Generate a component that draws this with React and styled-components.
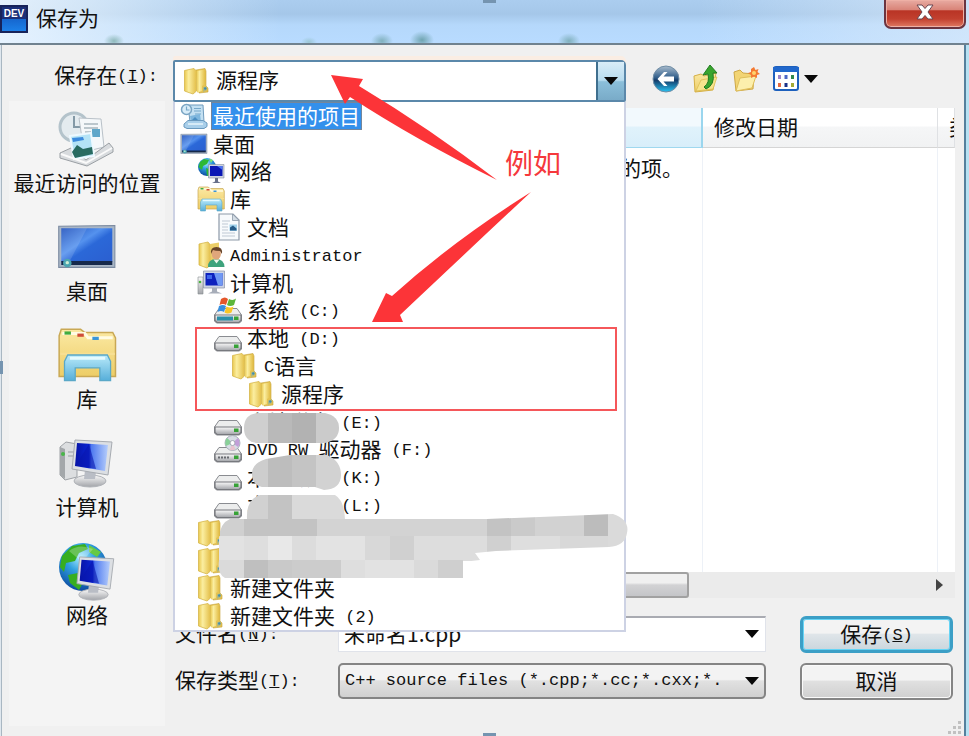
import React from "react";
import styled, { createGlobalStyle } from "styled-components";

const cjk = '"Noto Sans CJK SC", "Noto Sans", sans-serif';
const mono = '"Liberation Mono", "Noto Sans CJK SC", monospace';

const GlobalStyle = createGlobalStyle`
  * { box-sizing: border-box; }
  body {
    margin: 0;
    font-family: ${cjk};
    font-size: 21px;
    line-height: 26px;
    color: #111;
    background: #c4def8;
    overflow: hidden;
  }
  button, input, select { font: inherit; color: inherit; margin: 0; }
`;

const Window = styled.div`
  position: relative;
  min-height: 100vh;
  display: flex;
  flex-direction: column;
  padding: 0 3px 0 1px;
  background: linear-gradient(90deg, #dfe7ee 0 50%, #b7e2f3 50%);
`;

const TitleBar = styled.header`
  height: 45px;
  margin: 0 -3px 0 -1px;
  display: flex;
  align-items: flex-start;
  border-bottom: 2px solid #70828f;
  background:
    radial-gradient(ellipse 10px 7px at 114px 41px, #8fb9bb, transparent),
    radial-gradient(ellipse 8px 5px at 309px 42px, #9cc7d6, transparent),
    radial-gradient(ellipse 11px 8px at 382px 41px, #80b0bd, transparent),
    radial-gradient(ellipse 12px 9px at 422px 40px, #6fa4b0, transparent),
    radial-gradient(ellipse 11px 8px at 569px 41px, #80b0bd, transparent),
    linear-gradient(90deg, #f2f9ffcc 0, #e6f2fcaa 90px, transparent 280px, transparent 72%, #dcebfaaa 100%),
    linear-gradient(180deg, #abcdef 0, #a5c7e9 14px, #b5d8fb 25px, #b8dbff 42px);
`;

const AppBadge = styled.span`
  width: 28px;
  height: 28px;
  margin-top: 5px;
  border: 2px solid #17235a;
  background: linear-gradient(180deg, #1b2f78 0 48%, #1667cf 52%, #1c80e8);
  color: #fff;
  font: bold 10px/13px "Liberation Sans", sans-serif;
  text-align: center;
  overflow: hidden;
`;

const Title = styled.h1`
  margin: 4px 0 0 8px;
  flex: 1;
  font-size: 21px;
  line-height: 26px;
  font-weight: 400;
`;

const CloseButton = styled.button`
  width: 82px;
  height: 29px;
  margin-right: 3px;
  padding: 0 0 4px;
  display: grid;
  place-items: center;
  border: 2px solid #6b3440;
  border-top: 0;
  border-radius: 0 0 7px 7px;
  box-shadow: inset 0 0 0 1px #eeb0a5;
  background: linear-gradient(180deg, #e8aba2 0, #d98478 36%, #b93425 40%, #c2402f 70%, #e07a63 100%);
`;

const Body = styled.main`
  flex: 1;
  display: flex;
  border: 1px solid #a9b7c2;
  border-width: 0 2px 0 1px;
  border-right-color: #55809d;
  background: #f0f0f0;
`;

const LeftColumn = styled.div`
  width: 171px;
  flex: none;
  display: flex;
  flex-direction: column;
`;

const LookInLabel = styled.label`
  height: 56px;
  padding: 16px 15px 0 0;
  text-align: right;
  white-space: nowrap;
`;

const Latin = styled.span`
  font-family: ${mono};
  font-size: 17px;
  line-height: 17px;
  vertical-align: ${(p) => (p.$raised ? "2px" : "baseline")};
  white-space: pre;
`;

const Places = styled.nav`
  flex: 1;
  margin: 0 8px 10px 7px;
  padding-top: 8px;
  background: #f4f4f4;
`;

const Place = styled.button`
  width: 100%;
  height: 108px;
  padding: 0;
  display: flex;
  flex-direction: column;
  align-items: center;
  border: 0;
  background: none;
  white-space: nowrap;
`;

const RightColumn = styled.div`
  flex: 1;
  min-width: 0;
  display: flex;
  flex-direction: column;
  padding: 15px 9px 37px 0;
`;

const TopBar = styled.div`
  display: flex;
  align-items: center;
  height: 42px;
  margin-bottom: 6px;
`;

const Combo = styled.div`
  position: relative;
  z-index: 2;
  flex: 0 1 453px;
  height: 42px;
`;

const ComboButton = styled.button`
  width: 100%;
  height: 42px;
  display: flex;
  align-items: center;
  gap: 5px;
  padding: 0 0 0 8px;
  border: 2px solid #5b88aa;
  border-radius: 2px 5px 2px 2px;
  background: #fff;
  box-shadow: 0 -4px 0 #faede3;
  text-align: left;
`;

const ComboValue = styled.span`
  padding-bottom: 4px;
`;

const ComboArrow = styled.span`
  margin-left: auto;
  width: 28px;
  height: 38px;
  display: grid;
  place-items: center;
  border-left: 2px solid #3f6f8e;
  background: linear-gradient(180deg, #d9edf8 0, #b8dcef 48%, #8bbfda 52%, #79abc8);
`;

const Popup = styled.ul`
  position: absolute;
  top: 42px;
  left: 0;
  right: 0;
  height: 530px;
  margin: 0;
  padding: 0 0 0 5px;
  display: grid;
  grid-template-rows: repeat(19, 1fr);
  list-style: none;
  background: #fff;
  border: 2px solid #cdd2e4;
  border-top: 0;
`;

const Row = styled.li`
  display: flex;
  align-items: center;
  min-height: 0;
  padding-left: ${(p) => p.$level * 17}px;
  white-space: nowrap;
`;

const RowText = styled.span`
  margin-left: 4px;
  padding: 0 1px;
  height: 26px;
  line-height: 24px;
  color: ${(p) => (p.$selected ? "#fff" : "#111")};
  background: ${(p) => (p.$selected ? "#3390ec" : "none")};
  outline: ${(p) => (p.$selected ? "1px solid #74869b" : "none")};
`;

const Overlay = styled.svg`
  position: absolute;
  top: 0;
  left: 0;
  overflow: visible;
  pointer-events: none;
`;

const Note = styled.strong`
  position: absolute;
  top: 86px;
  left: 332px;
  font-size: 28px;
  line-height: 32px;
  font-weight: 400;
  color: #f5383c;
`;

const Tools = styled.div`
  display: flex;
  align-items: center;
  gap: 12px;
  margin: 0 0 4px 26px;
`;

const ToolButton = styled.button`
  display: flex;
  align-items: center;
  gap: 4px;
  padding: 0;
  border: 0;
  background: none;
`;

const ListPanel = styled.div`
  flex: 1;
  display: flex;
  flex-direction: column;
  background: #fff;
  margin-bottom: 18px;
`;

const FileTable = styled.table`
  flex: 1;
  width: 100%;
  display: grid;
  grid-template-rows: 40px 1fr;
  border-spacing: 0;

  thead, tbody { display: grid; }
  tr { display: grid; grid-template-columns: minmax(0, 530px) minmax(0, 1fr) 17px; }
  th { text-align: left; font-weight: 400; padding: 5px 0 0 11px; overflow: hidden; white-space: nowrap; }
  td { padding: 6px 19px 0 0; text-align: right; border-right: 1px solid #edf1f7; }
  td:last-child { border: 0; padding: 0; }
`;

const HeadCell = styled.th`
  border-bottom: 1px solid ${(p) => (p.$active ? "#9fd8ef" : "#d5d5d5")};
  border-right: ${(p) => (p.$active ? "2px solid #9bd6ee" : "1px solid #dfe1e4")};
  background: ${(p) =>
    p.$active
      ? "linear-gradient(180deg, #f2f9fd 0 45%, #e0f2fb 50%, #d8eefa)"
      : "linear-gradient(180deg, #fff 0 45%, #f5f6f7 50%, #f1f2f3)"};
`;

const ScrollTrack = styled.div`
  height: 26px;
  display: flex;
  justify-content: space-between;
  align-items: center;
  padding-right: 12px;
  background: #ebebeb;
`;

const ScrollThumb = styled.div`
  width: 67%;
  height: 26px;
  border: 2px solid #a1a1a1;
  border-radius: 3px;
  background: linear-gradient(180deg, #f0f0f0 0 40%, #d2d2d4 50%, #c4c5c8);
`;

const Form = styled.form`
  display: grid;
  grid-template-columns: 165px minmax(0, 1fr) 153px;
  grid-auto-rows: 36px;
  row-gap: 11px;
  align-items: center;
  margin-right: 2px;
`;

const FieldLabel = styled.label`
  padding: 0 0 4px 2px;
  white-space: nowrap;
`;

const Field = styled.div`
  display: grid;
  align-items: center;
  margin-right: 34px;

  > * { grid-area: 1 / 1; }
  > svg { justify-self: end; margin-right: 7px; pointer-events: none; }
`;

const TextBox = styled.input`
  width: 100%;
  height: 36px;
  padding: 0 32px 4px 5px;
  border: 1px solid #e0e3ea;
  border-top: 2px solid #a9abb2;
  background: #fff;
`;

const TypeSelect = styled.select`
  appearance: none;
  width: 100%;
  height: 36px;
  padding: 0 34px 0 5px;
  border: 2px solid #848484;
  border-radius: 5px;
  font-family: ${mono};
  font-size: 17px;
  background: linear-gradient(180deg, #f3f3f3 0 45%, #e1e1e1 50%, #d0d0d0);
`;

const PushButton = styled.button`
  height: 37px;
  padding: 0 0 3px;
  border: ${(p) => (p.$primary ? "3px solid #3c9fc6" : "2px solid #858585")};
  border-radius: 6px;
  box-shadow: inset 0 0 0 1px ${(p) => (p.$primary ? "#66d4f5" : "#fafafa")};
  background: linear-gradient(180deg, #f3f3f3 0 45%, ${(p) => (p.$primary ? "#dfe5e9 50%, #cbd6dd" : "#e0e0e0 50%, #cfcfcf")});
`;

const Handle = styled.span`
  position: absolute;
  width: ${(p) => (p.$side ? 3 : 13)}px;
  height: ${(p) => (p.$side ? 13 : 3)}px;
  ${(p) => (p.$side ? "left: 0; top: 49%;" : "left: calc(50% - 2px);")}
  ${(p) => (p.$edge === "top" ? "top: 0;" : "")}
  ${(p) => (p.$edge === "bottom" ? "bottom: 0;" : "")}
  background: #7594b0;
`;

const Grip = styled.svg`
  position: absolute;
  right: 6px;
  bottom: 0;
`;

const Definitions = styled.svg`
  position: absolute;
`;

/* ---------- small icons ---------- */

const Icon = ({ size = 28, box = 28, children }) => (
  <svg width={size} height={size} viewBox={`0 0 ${box} ${box}`} aria-hidden="true">
    {children}
  </svg>
);

const Gradients = () => (
  <Definitions width="0" height="0" aria-hidden="true">
    <defs>
      <linearGradient id="gold" x1="0" x2="1"><stop offset="0" stopColor="#e9c84f" /><stop offset=".35" stopColor="#fbeea0" /><stop offset="1" stopColor="#e3be48" /></linearGradient>
      <linearGradient id="goldV" x1="0" x2="0" y1="0" y2="1"><stop offset="0" stopColor="#fbe9a4" /><stop offset="1" stopColor="#edcd66" /></linearGradient>
      <linearGradient id="blue" x1="0" x2="1" y1="0" y2="1"><stop offset="0" stopColor="#1d50bd" /><stop offset=".4" stopColor="#5592ee" /><stop offset=".55" stopColor="#2b68d8" /><stop offset="1" stopColor="#2b5fd0" /></linearGradient>
      <linearGradient id="screen" x1="0" x2="1"><stop offset="0" stopColor="#0714a5" /><stop offset=".42" stopColor="#0b24d2" /><stop offset=".5" stopColor="#4f7af0" /><stop offset="1" stopColor="#b5cdfb" /></linearGradient>
      <radialGradient id="globe" cx=".45" cy=".3" r=".75"><stop offset="0" stopColor="#a9edff" /><stop offset=".4" stopColor="#2f9fe0" /><stop offset="1" stopColor="#083f97" /></radialGradient>
      <linearGradient id="metal" x1="0" x2="0" y1="0" y2="1"><stop offset="0" stopColor="#fafafa" /><stop offset="1" stopColor="#a2a4a9" /></linearGradient>
      <linearGradient id="cyan" x1="0" x2="0" y1="0" y2="1"><stop offset="0" stopColor="#b9eafa" /><stop offset="1" stopColor="#56aed9" /></linearGradient>
      <linearGradient id="nav" x1="0" x2="0" y1="0" y2="1"><stop offset="0" stopColor="#a9bccd" /><stop offset=".45" stopColor="#315e8b" /><stop offset=".55" stopColor="#153c69" /><stop offset="1" stopColor="#28c4f4" /></linearGradient>
    </defs>
  </Definitions>
);

const Folder = () => (
  <Icon>
    <path d="M13 3 22 1.500 23 4V19l2 2v4l-9 1z" fill="#e5c351" stroke="#c6a33a" strokeWidth=".6" />
    <path d="M1.500 3.500 11 1.500 13.500 4V24L10 27 1.500 24z" fill="url(#gold)" stroke="#d6b64a" strokeWidth=".8" />
    <path d="M13.500 4 22 2.500V17l-3 2v5l-5 1.500z" fill="url(#gold)" />
    <path d="M20 20.500 23.500 19v4.500L20 25z" fill="#b2b77e" />
    <circle cx="22.300" cy="21.500" r="1.300" fill="#3f8fb1" />
  </Icon>
);

const Desktop = ({ size }) => (
  <Icon size={size}>
    <path d="M.8 4.300 27 4V23.500H.8z" fill="#a9b6c6" stroke="#7c8ba1" strokeWidth=".5" />
    <path d="M2 5.300H25.800V21H2z" fill="url(#blue)" />
    <path d="M2 20.500H25.800v1.900H2z" fill="#16294b" />
    <path d="M2 5.300H14L6 20.500H2z" fill="#fff" opacity=".12" />
    <circle cx="4.800" cy="21.500" r="2" fill="#4ba5b0" /><circle cx="4.800" cy="21.300" r=".8" fill="#cdeed4" />
  </Icon>
);

const BluePrint = () => (
  <Icon>
    <path d="M8 3H23L24 20H10z" fill="#c3e0f2" stroke="#6f9bbd" />
    <circle cx="6.500" cy="7.500" r="5" fill="#d8ecf8" stroke="#7aa5c4" strokeWidth="1.500" />
    <path d="M6.500 4.500v3.500H9.500M14 6.500h7M14 9h7M15 12h6" stroke="#77a8c9" fill="none" strokeWidth="1.200" />
    <path d="m10 14 10-2 1 8H11z" fill="#7fb7de" /><path d="m11 19 4-4 5 5z" fill="#4a8ec2" />
    <path d="M4 22 8 18.500H23L27 21v3.500l-3 2H7L4 25z" fill="#a9cfea" stroke="#6b9abf" />
    <path d="M8 22H23" stroke="#e7f4fb" strokeWidth="1.500" />
  </Icon>
);

const Network = () => (
  <Icon>
    <circle cx="10" cy="10" r="9" fill="url(#globe)" />
    <path d="M3 5 7 2 12 3 10 7 6 9 5 13 1.500 10zM9 11l5 2-1 5-3 1z" fill="#2cb834" />
    <path d="m12 1.500 4 1.500-2 3z" fill="#7de36c" />
    <path d="M11.500 7.500H27V21H11.500z" fill="#cfd4de" stroke="#888fa0" strokeWidth=".6" />
    <path d="M13 9H25.500V19H13z" fill="#0b18b5" /><path d="m20 9 5.500 4V9z" fill="#4c74ef" />
    <path d="M18 21h3v3.500l3 1.500H15l3-1.500z" fill="#68708a" />
  </Icon>
);

const Library = ({ size }) => (
  <Icon size={size}>
    <path d="M1 5 2 2H11l2 1.500H26L27.300 6V24H1z" fill="url(#goldV)" stroke="#c9a854" strokeWidth=".7" />
    <path d="M2.500 4H13l1.500 2H26" stroke="#fffbe3" strokeWidth="1.400" fill="none" />
    <path d="M3.500 3h3v1.500h-3z" fill="#41ac40" /><path d="M9.500 4h3v1.500h-3z" fill="#cf4c39" /><path d="M16.500 5.500h3V7h-3z" fill="#3a95d8" />
    <path d="M1.500 13.500H27" stroke="#f7df92" />
    <path d="M5 14H23.500L25 17v9H20V20H8.500v6H3.500V17z" fill="url(#cyan)" stroke="#5aa8c8" strokeWidth=".6" />
    <path d="M6 15.500H22.500" stroke="#e4faff" strokeWidth="1.400" />
  </Icon>
);

const Document = () => (
  <Icon>
    <path d="M5 1H19L25 7V27H5z" fill="#f7fafc" stroke="#8d99a8" strokeWidth="1.200" />
    <path d="M18.500 1V7.500H25z" fill="#d4dde5" stroke="#8d99a8" strokeWidth=".8" />
    <path d="M8 8h8M8 11h6M8 14h6M8 17h6M8 20h13M8 23h13" stroke="#bfc9d4" />
    <path d="M15.500 11.500H23V18H15.500z" fill="#9ed0ea" /><path d="M16 17.500v-3l3-2 3.500 3v2z" fill="#265b87" />
  </Icon>
);

const UserFolder = () => (
  <Icon>
    <path d="M2 3 11 1 13.500 4V24L10 27 2 24z" fill="url(#gold)" stroke="#d6b64a" strokeWidth=".8" />
    <path d="M13 3 22 1.500V24l-8 2z" fill="#ebce68" />
    <path d="M11 26q0-8 8-8t8.500 8z" fill="#3ea37d" /><path d="m16.500 18.500 3 4 3-4z" fill="#eef5ec" />
    <ellipse cx="19.300" cy="13" rx="4.600" ry="5.500" fill="#dfa67b" />
    <path d="M14 13Q13 6 19.500 6t5.500 7l-2-3q-5 0-7-1z" fill="#674429" />
  </Icon>
);

const Computer = () => (
  <Icon>
    <path d="M1 8H6V25H1z" fill="url(#metal)" stroke="#85898f" strokeWidth=".6" /><circle cx="3" cy="13" r="1.300" fill="#49b43d" />
    <path d="M6.500 2H27.500V19H6.500z" fill="#cdd4e4" stroke="#8991a3" strokeWidth=".7" />
    <path d="M8.500 4H25.500V16.500H8.500z" fill="#0d20bd" /><path d="M17 4h8.500v12.500H21z" fill="#6f98f4" /><path d="M10 6h5v4h-5z" fill="#3d65eb" />
    <path d="M15 19h5v3.500l5 2H11l4-2z" fill="#a7adb9" />
  </Icon>
);

const DriveBody = () => (
  <>
    <path d="M5 12.500H23L27.500 19V25l-2 2H2.500l-2-2V19z" fill="#eceded" stroke="#8a8c91" />
    <path d="M1 19H27v5.500L25 26.500H3L1 24.500z" fill="url(#metal)" stroke="#77797e" strokeWidth="1.200" />
    <path d="M20 20.500h4.500v3.500H20z" fill="#37a237" />
  </>
);
const Drive = () => <Icon><DriveBody /></Icon>;

const SystemDrive = () => (
  <Icon>
    <DriveBody />
    <path d="M3 20.500H19v4H3z" fill="#2a8fa9" />
    <path d="M7 3q4-3 7 0l-2 6q-3-2-6.500 0z" fill="#e4572b" /><path d="M15 3q4 2 7-.5L20 9q-4 2-7 0z" fill="#5db63a" />
    <path d="M5 10q4-2 7 0l-2 6q-3-2-6.500 0z" fill="#378fe0" /><path d="M12.500 10.500q4 2 7 0l-2 6q-4 2-7 0z" fill="#f8c626" />
  </Icon>
);

const DvdDrive = () => (
  <Icon>
    <DriveBody />
    <circle cx="18.500" cy="8" r="7.500" fill="#d7dde5" stroke="#9ba3ad" strokeWidth=".8" />
    <path d="M18.500 8 13 3q-3 4-1 8z" fill="#88d198" /><path d="M18.500 8 24 3q3 5 0 9z" fill="#c29ed8" /><path d="m18.500 8-3 7q4 1 6-1z" fill="#e9c3ce" />
    <circle cx="18.500" cy="8" r="2.500" fill="#fff" stroke="#a4a8b4" />
    <path d="M4 22.500H16" stroke="#686b70" strokeWidth="2" strokeDasharray="2 1" />
  </Icon>
);

/* ---------- large sidebar icons ---------- */

const RecentLarge = () => (
  <Icon size={60} box={60}>
    <circle cx="17" cy="18" r="14" fill="#e4ebef" stroke="#b4c3cb" strokeWidth="3" />
    <path d="M17 7V18H27" stroke="#8499a6" strokeWidth="2" fill="none" />
    <path d="M22 9 44 10 47 38 27 43z" fill="#f5f8fa" stroke="#b9c1c8" />
    <path d="M27 15H41M27 19H41M28 23H34M29 27H34" stroke="#a9b6bf" strokeWidth="1.500" />
    <path d="M35 20H43V28H35z" fill="#5fa7ca" />
    <path d="M3 44 14 39 29 51 52 34 56 39V43L30 57 3 49z" fill="#d8dbde" stroke="#9ba0a5" />
    <path d="m13 27 21-3 3 23-20 3z" fill="#b4e3f6" stroke="#eef9ff" strokeWidth="2" />
    <path d="m15 29 11-1 1 3-11 2z" fill="#3c8bdd" /><path d="m15 43 5-7 6 4 9-2 1 7-18 4z" fill="#286b61" />
    <path d="m4 45 25 9 26-15" stroke="#fafafa" strokeWidth="2" fill="none" />
  </Icon>
);

const Monitor = () => (
  <>
    <ellipse cx="19" cy="42" rx="16" ry="6" fill="url(#metal)" stroke="#b0b3b8" />
    <path d="m14 31 11 2-1 7H13z" fill="#b9bdc5" />
    <path d="M4 1 41 3 37 36 1 30z" fill="#dcdfe3" stroke="#a7abb1" />
    <path d="M6 4 37 6 34 32 4 27z" fill="url(#screen)" />
    <path d="m18 5 7 25-11-2-9-2Z" fill="#0816ae" opacity=".6" />
  </>
);

const ComputerLarge = () => (
  <Icon size={60} box={60}>
    <path d="m3 14 6-5 11 2V44L8 47 3 42z" fill="#dcdee0" stroke="#9fa3a7" /><path d="m3 14 5 2V46l-5-4z" fill="#a3a7aa" />
    <circle cx="6" cy="21" r="2" fill="#48b649" /><path d="M11 19h8M11 23h8" stroke="#999ea3" />
    <g transform="translate(14 6)"><Monitor /></g>
  </Icon>
);

const NetworkLarge = () => (
  <Icon size={60} box={60}>
    <circle cx="26" cy="26" r="24" fill="url(#globe)" />
    <path d="M5 15 15 5 28 3 31 8 22 12 18 20 9 22 7 31 3 26zM11 34 21 32 28 38 22 49 13 42z" fill="#37ae20" />
    <path d="m32 4 12 7-4 5-8-5z" fill="#67c944" />
    <path d="M12 10Q22 2 36 8L25 21z" fill="#fff" opacity=".25" />
    <g transform="translate(19 15) scale(.92)"><Monitor /></g>
  </Icon>
);

const Triangle = () => (
  <svg width="14" height="8" viewBox="0 0 14 8" aria-hidden="true"><path d="M0 0H14L7 8z" fill="#080808" /></svg>
);

const L = ({ children }) => <Latin $raised>{children}</Latin>;

const places = [
  ["最近访问的位置", <RecentLarge />],
  ["桌面", <Desktop size={60} />],
  ["库", <Library size={60} />],
  ["计算机", <ComputerLarge />],
  ["网络", <NetworkLarge />],
];

const rows = [
  [0, BluePrint, "最近使用的项目"],
  [0, Desktop, "桌面"],
  [1, Network, "网络"],
  [1, Library, "库"],
  [2, Document, "文档"],
  [1, UserFolder, "", "Administrator"],
  [1, Computer, "计算机"],
  [2, SystemDrive, "系统", " (C:)"],
  [2, Drive, "本地", " (D:)"],
  [3, Folder, <><L>C</L>语言</>],
  [4, Folder, "源程序"],
  [2, Drive, "本地磁盘", " (E:)"],
  [2, DvdDrive, <><L>DVD RW </L>驱动器</>, " (F:)"],
  [2, Drive, "本地磁盘", " (K:)"],
  [2, Drive, "本地磁盘", " (L:)"],
  [1, Folder, ""],
  [1, Folder, ""],
  [1, Folder, "新建文件夹"],
  [1, Folder, "新建文件夹", " (2)"],
];

/* x, y, width, height, grey of every mosaic tile */
const tiles = [
  [220, 517, 24, 19, "#d0d0d0"], [244, 517, 73, 19, "#c3c3c3"], [317, 517, 170, 19, "#d3d3d3"],
  [487, 513, 24, 23, "#c3c3c3"], [511, 513, 24, 23, "#cacaca"], [535, 513, 49, 23, "#d2d2d2"], [584, 513, 24, 23, "#bcbcbc"], [608, 513, 22, 38, "#dadada"],
  [218, 536, 26, 24, "#e2e2e2"], [244, 536, 24, 24, "#dedede"], [268, 536, 24, 24, "#e8e8e8"], [292, 536, 24, 24, "#dcdcdc"], [316, 536, 49, 24, "#e3e3e3"],
  [365, 536, 25, 24, "#d8d8d8"], [390, 536, 24, 24, "#d0d0d0"], [414, 536, 73, 24, "#dddddd"], [487, 536, 24, 15, "#d0d0d0"], [511, 536, 49, 15, "#dedede"], [560, 536, 48, 15, "#d8d8d8"],
  [218, 560, 26, 18, "#dadada"], [244, 560, 24, 18, "#bfbfbf"], [268, 560, 24, 18, "#c9c9c9"], [292, 560, 49, 18, "#cccccc"], [341, 560, 24, 18, "#dedede"],
  [365, 560, 49, 18, "#e2e2e2"], [414, 560, 24, 18, "#dadada"], [438, 560, 25, 18, "#cfcfcf"],
];

const Strip = ({ id, d, cols, y }) => (
  <g clipPath={`url(#${id})`}>
    <clipPath id={id}><path d={d} /></clipPath>
    {cols.map((c, i) => <rect key={i} x={[244, 268, 292, 316][i]} y={y} width={i === 3 ? 40 : 24} height="40" fill={c} />)}
  </g>
);

const Annotations = () => (
  <Overlay width="453" height="575" viewBox="173 60 453 575" aria-hidden="true">
    <Strip id="maskE" y={410} cols={["#cfcfcf", "#b9b9b9", "#b2b2b2", "#cbcbcb"]} d="M258 413H325Q339 416 339 428T325 443H258Q244 442 244 428T258 413z" />
    <Strip id="maskK" y={454} cols={["#cdcdcd", "#bdbdbd", "#c4c4c4", "#d2d2d2"]} d="M266 459 290 455H327Q341 461 341 475T324 490L315 487H262Q252 485 252 474T266 459z" />
    <Strip id="maskL" y={493} cols={["#d1d1d1", "#c3c3c3", "#dadada", "#dadada"]} d="M260 495H335Q344 500 345 519H247Q246 499 260 495z" />
    <clipPath id="maskBig">
      <path d="M230 519H487L565 516 613 514Q630 520 627 533 625 546 609 547L496 551 475 553 480 560 463 562V578H225Q217 574 219 560V538Q220 523 230 519z" />
    </clipPath>
    <g clipPath="url(#maskBig)">
      {tiles.map(([x, y, w, h, c]) => <rect key={`${x}-${y}`} x={x} y={y} width={w} height={h + 1} fill={c} />)}
    </g>
    <rect x="196" y="328" width="420" height="82" fill="none" stroke="#f5575a" strokeWidth="2" />
    <path d="M331 75 363 79 359 86Q429 128 497 180 416 140 350 97L345 104z" fill="#fc3438" />
    <path d="M531 192Q471 248 400 315L403 322 372 322 386 293 392 296Q453 241 531 192z" fill="#fc3438" />
  </Overlay>
);

export default function App() {
  return (
    <>
      <GlobalStyle />
      <Gradients />
      <Window>
        <TitleBar>
          <AppBadge>DEV</AppBadge>
          <Title>保存为</Title>
          <CloseButton aria-label="关闭">
            <svg width="20" height="16" viewBox="0 0 20 16" aria-hidden="true">
              <path d="M2 1H7L10 4.500 13 1H18L13 8 18 15H13L10 11.500 7 15H2L7 8z" fill="#fff" stroke="#6b4650" />
            </svg>
          </CloseButton>
        </TitleBar>

        <Body>
          <LeftColumn>
            <LookInLabel htmlFor="look-in">保存在<L>(<u>I</u>):</L></LookInLabel>
            <Places>
              {places.map(([name, icon]) => <Place key={name}>{icon}{name}</Place>)}
            </Places>
          </LeftColumn>

          <RightColumn>
            <TopBar>
              <Combo>
                <ComboButton id="look-in" aria-haspopup="listbox" aria-expanded="true">
                  <Folder />
                  <ComboValue>源程序</ComboValue>
                  <ComboArrow><Triangle /></ComboArrow>
                </ComboButton>
                <Popup role="listbox" aria-label="保存在">
                  {rows.map(([level, Glyph, name, latin], i) => (
                    <Row key={i} role="option" aria-selected={i === 0} $level={level}>
                      <Glyph />
                      <RowText $selected={i === 0}>{name}{latin && <L>{latin}</L>}</RowText>
                    </Row>
                  ))}
                </Popup>
                <Annotations />
                <Note>例如</Note>
              </Combo>
              <Tools>
                <ToolButton aria-label="后退">
                  <Icon>
                    <circle cx="14" cy="14" r="13" fill="url(#nav)" stroke="#708da5" />
                    <path d="M12 7 5.500 14 12 21H15.500L11.500 16.500H22V11.500H11.500L15.500 7z" fill="#fff" />
                  </Icon>
                </ToolButton>
                <ToolButton aria-label="向上一级">
                  <Icon>
                    <path d="M2 11 9 9l3 2 12-3-3 17-18 2z" fill="url(#goldV)" stroke="#d5b046" />
                    <path d="m4 26 5-11 16-3-4 12z" fill="#f8e48d" stroke="#d9b950" strokeWidth=".7" />
                    <path d="M12 22Q18 18 16 9L11 10 18 0 25 8 21 8Q23 20 14 24z" fill="#39a52e" stroke="#237c22" />
                  </Icon>
                </ToolButton>
                <ToolButton aria-label="新建文件夹">
                  <Icon>
                    <path d="M2 7 8 5l3 3 11 1-1 15-17 2z" fill="#f2d473" stroke="#cda746" />
                    <path d="m4 26 4-13 16-2-4 12z" fill="#fcefac" stroke="#dfbe5a" />
                    <path d="m22 2 1.500 3 3-1-1 3L28 9l-3 1 0 3-3-1.500L19 13V10L16 8l3-1V4z" fill="#f47a32" /><circle cx="22" cy="8" r="2" fill="#ffd26c" />
                  </Icon>
                </ToolButton>
                <ToolButton aria-label="查看菜单">
                  <Icon>
                    <rect x="2" y="2" width="24" height="23" rx="2" fill="#fff" stroke="#1d60bd" strokeWidth="2" />
                    <path d="M1 2H27V7H1z" fill="#2168cc" />
                    <path d="M6 10h3v4H6z" fill="#9b83c8" /><path d="M12.500 10h3v4h-3z" fill="#4c67c5" /><path d="M19 10h3v4h-3z" fill="#31884d" />
                    <path d="M6 18h3v4H6z" fill="#e46a42" /><path d="M12.500 18h3v4h-3z" fill="#1b3289" /><path d="M19 18h3v4h-3z" fill="#a4aa35" />
                  </Icon>
                  <Triangle />
                </ToolButton>
              </Tools>
            </TopBar>

            <ListPanel>
              <FileTable>
                <thead>
                  <tr>
                    <HeadCell $active>名称</HeadCell>
                    <HeadCell>修改日期</HeadCell>
                    <HeadCell>类型</HeadCell>
                  </tr>
                </thead>
                <tbody>
                  <tr><td>没有与搜索条件匹配的项。</td><td /><td /></tr>
                </tbody>
              </FileTable>
              <ScrollTrack>
                <ScrollThumb />
                <svg width="7" height="12" viewBox="0 0 7 12" aria-hidden="true"><path d="M0 0 7 6 0 12z" fill="#444" /></svg>
              </ScrollTrack>
            </ListPanel>

            <Form onSubmit={(e) => e.preventDefault()}>
              <FieldLabel htmlFor="file-name">文件名<L>(<u>N</u>):</L></FieldLabel>
              <Field>
                <TextBox id="file-name" defaultValue="未命名1.cpp" />
                <Triangle />
              </Field>
              <PushButton type="submit" $primary>保存<L>(<u>S</u>)</L></PushButton>
              <FieldLabel htmlFor="file-type">保存类型<L>(<u>T</u>):</L></FieldLabel>
              <Field>
                <TypeSelect id="file-type">
                  <option>C++ source files (*.cpp;*.cc;*.cxx;*.</option>
                </TypeSelect>
                <Triangle />
              </Field>
              <PushButton type="button">取消</PushButton>
            </Form>
          </RightColumn>
        </Body>

        <Handle $edge="top" />
        <Handle $side />
        <Handle $edge="bottom" />
        <Grip width="18" height="16" viewBox="0 0 18 16" aria-hidden="true">
          <path d="M13 1h3v3h-3zM13 6h3v3h-3zM8 6h3v3H8zM13 11h3v3h-3zM8 11h3v3H8zM3 11h3v3H3z" fill="#c1c1c1" />
        </Grip>
      </Window>
    </>
  );
}
